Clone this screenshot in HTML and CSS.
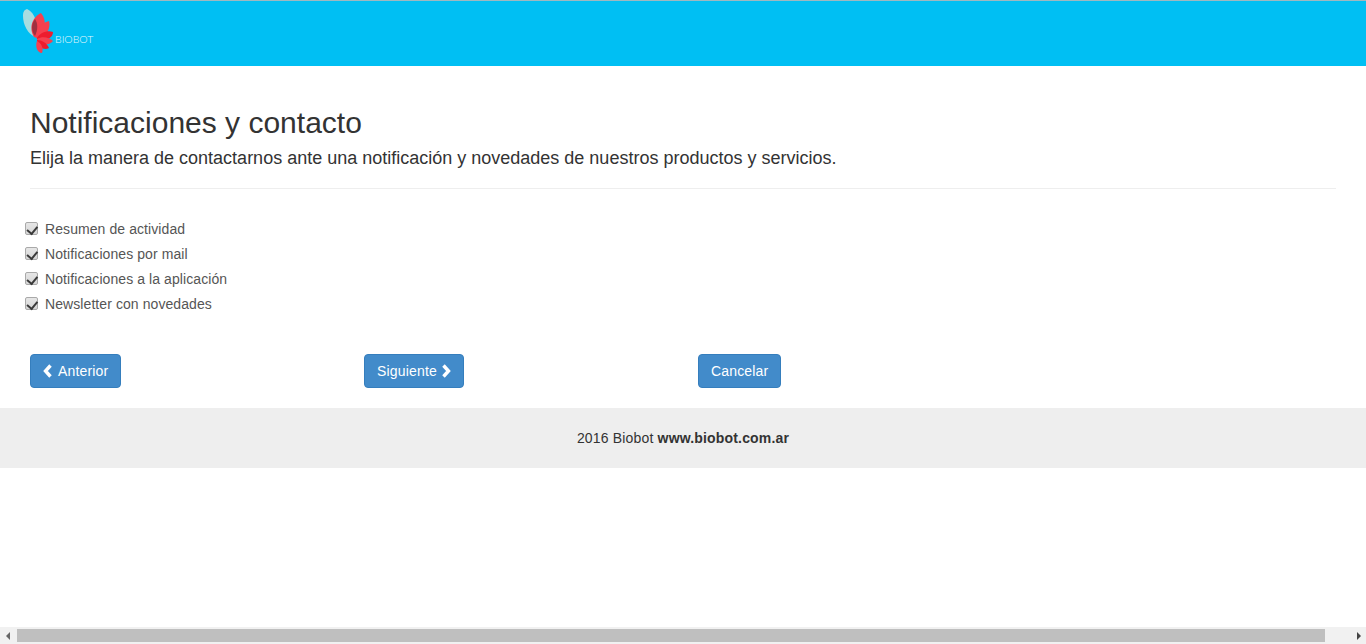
FILE: index.html
```html
<!DOCTYPE html>
<html lang="es">
<head>
<meta charset="utf-8">
<title>Notificaciones y contacto</title>
<link rel="stylesheet" href="styles.css">
</head>
<body>
<header class="topbar">
  <div class="brand">
    <svg class="brand-mark" width="36" height="46" viewBox="0 0 36 46" aria-hidden="true">
      <path d="M1 8C1 4 2 2 5 1C13 5 17 15 13 29C6 26 1 17 1 8Z" fill="#a8dde0"/>
      <path d="M12 29C6 19 11 9 19 5C25 12 24 22 15 30Z" fill="#f5404f"/>
      <path d="M13 11C16 15 16 22 13 28C9 23 9 16 13 11Z" fill="#a03040"/>
      <path d="M14 29C14 22 19 15 27 13C29 20 25 28 15 31Z" fill="#f5404f"/>
      <path d="M15 30C18 25 25 22 31 24C31 30 24 34 15 32Z" fill="#ed1c2e"/>
      <path d="M15 31C20 28 27 29 31 33C27 38 20 37 15 33Z" fill="#f5404f"/>
      <path d="M15 32C20 32 25 35 27 40C22 43 16 39 15 33Z" fill="#ed1c2e"/>
      <path d="M15 33C19 35 22 40 20 45C15 45 13 38 15 33Z" fill="#f5404f"/>
    </svg>
    <span class="brand-name">BIOBOT</span>
  </div>
</header>
<main class="content">
  <h2 class="title">Notificaciones y contacto</h2>
  <p class="subtitle">Elija la manera de contactarnos ante una notificación y novedades de nuestros productos y servicios.</p>
  <hr class="rule">
  <ul class="options">
    <li><label class="option"><input type="checkbox" checked>Resumen de actividad</label></li>
    <li><label class="option"><input type="checkbox" checked>Notificaciones por mail</label></li>
    <li><label class="option"><input type="checkbox" checked>Notificaciones a la aplicación</label></li>
    <li><label class="option"><input type="checkbox" checked>Newsletter con novedades</label></li>
  </ul>
  <div class="actions">
    <div class="action-col"><button class="btn" type="button"><svg class="chev" viewBox="0 0 10 14" aria-hidden="true"><path d="M7.5 1.5L2.5 7l5 5.5" /></svg>Anterior</button></div>
    <div class="action-col"><button class="btn" type="button">Siguiente<svg class="chev chev-right" viewBox="0 0 10 14" aria-hidden="true"><path d="M2.5 1.5L7.5 7l-5 5.5" /></svg></button></div>
    <div class="action-col"><button class="btn" type="button">Cancelar</button></div>
  </div>
</main>
<footer class="footer">2016 Biobot <strong>www.biobot.com.ar</strong></footer>
<div class="hscroll" aria-hidden="true">
  <span class="arrow arrow-left"></span>
  <span class="thumb"></span>
  <span class="arrow arrow-right"></span>
</div>
</body>
</html>
```
FILE: styles.css
```css
* { box-sizing: border-box; }
html, body { margin: 0; padding: 0; overflow: hidden; height: 100%; }
body {
  background: #fff;
  color: #333;
  font-family: "Liberation Sans", Arial, sans-serif;
  font-size: 14px;
  line-height: 20px;
}
.topbar {
  height: 66px;
  background: #00bff3;
  border-top: 1px solid #9fb8c0;
  padding: 7px 0 0 22px;
}
.brand { display: flex; align-items: flex-start; }
.brand-mark { display: block; flex: none; }
.brand-name {
  margin: 24px 0 0 -3px;
  color: #e4f8fd;
  font-family: Lato, "Liberation Sans", sans-serif;
  font-size: 10.5px;
  line-height: 14px;
  font-weight: 300;
}
.content { padding: 0 30px; }
.title {
  margin: 39px 0 0;
  font-size: 30px;
  line-height: 36px;
  font-weight: 400;
  color: #333;
}
.subtitle {
  margin: 6px 0 0;
  font-size: 18px;
  line-height: 23px;
  color: #333;
}
.rule {
  margin: 18px 0 0;
  border: 0;
  border-top: 1px solid #eee;
}
.options {
  list-style: none;
  margin: 27px 0 0 -5px;
  padding: 0;
}
.options li { height: 25px; }
.option {
  display: flex;
  align-items: center;
  height: 25px;
  color: #555;
  font-size: 14px;
  letter-spacing: 0.08px;
}
.option input {
  appearance: none;
  -webkit-appearance: none;
  position: relative;
  width: 13px;
  height: 13px;
  margin: 0 7px 0 0;
  flex: none;
  border: 1px solid #a9a9a9;
  border-radius: 2px;
  background: linear-gradient(#e6e6e6, #d6d6d6);
}
.option input:checked::after {
  content: "";
  position: absolute;
  left: 3px;
  top: 0.5px;
  width: 4.5px;
  height: 7.5px;
  border: solid #3a3a3a;
  border-width: 0 2.5px 2.5px 0;
  transform: rotate(40deg);
}
.actions {
  display: grid;
  grid-template-columns: 334px 334px 334px;
  margin-top: 38px;
}
.btn {
  display: inline-flex;
  align-items: center;
  height: 34px;
  padding: 0 12px;
  border: 1px solid #357ebd;
  border-radius: 4px;
  background: #428bca;
  color: #fff;
  font-family: inherit;
  font-size: 14px;
  line-height: 20px;
  letter-spacing: 0.17px;
}
.chev {
  width: 10px;
  height: 14px;
  margin-right: 5px;
  flex: none;
  fill: none;
  stroke: #fff;
  stroke-width: 3.4;
}
.chev-right { margin: 0 0 0 4px; }
.footer {
  margin-top: 20px;
  height: 60px;
  background: #eee;
  text-align: center;
  line-height: 60px;
  font-size: 14px;
  letter-spacing: 0.17px;
}
.hscroll {
  position: fixed;
  left: 0;
  right: 0;
  bottom: 0;
  height: 17px;
  background: #f1f1f1;
}
.thumb {
  position: absolute;
  left: 17px;
  top: 2px;
  width: 1308px;
  height: 13px;
  background: #bfbfbf;
}
.arrow {
  position: absolute;
  top: 5px;
  width: 0;
  height: 0;
  border-top: 4px solid transparent;
  border-bottom: 4px solid transparent;
}
.arrow-left { left: 6px; border-right: 4px solid #666; }
.arrow-right { right: 5px; border-left: 4px solid #444; }
```
